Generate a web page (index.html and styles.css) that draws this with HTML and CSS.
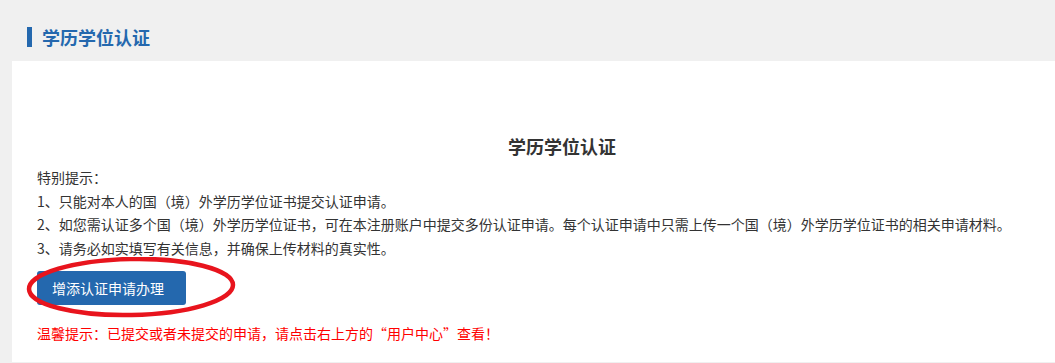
FILE: index.html
```
<!DOCTYPE html>
<html lang="zh-CN">
<head>
<meta charset="utf-8">
<title>学历学位认证</title>
<link rel="stylesheet" href="styles.css">
</head>
<body>
<div class="page-head">
  <h2 class="page-title">学历学位认证</h2>
</div>
<div class="panel">
  <h3 class="panel-title">学历学位认证</h3>
  <div class="notes">
    <p>特别提示：</p>
    <p>1、只能对本人的国（境）外学历学位证书提交认证申请。</p>
    <p>2、如您需认证多个国（境）外学历学位证书，可在本注册账户中提交多份认证申请。每个认证申请中只需上传一个国（境）外学历学位证书的相关申请材料。</p>
    <p>3、请务必如实填写有关信息，并确保上传材料的真实性。</p>
  </div>
  <div class="btn-wrap">
    <a class="btn-add" href="#">增添认证申请办理</a>
    <svg class="mark" width="221" height="70" viewBox="0 0 221 70" aria-hidden="true">
      <ellipse cx="105" cy="30" rx="102" ry="28" fill="none" stroke="#e8141d" stroke-width="4.5" transform="rotate(-1.2 105 30)"/>
    </svg>
  </div>
  <p class="tip">温馨提示：已提交或者未提交的申请，请点击右上方的“用户中心”查看！</p>
</div>
</body>
</html>
```
FILE: styles.css
```
html, body {
  margin: 0;
  padding: 0;
}
body {
  background: #f0f0f0;
  font-family: "Noto Sans CJK SC", "Microsoft YaHei", sans-serif;
  color: #333;
  font-size: 14px;
}
.page-head {
  padding: 27px 0 14px 27px;
}
.page-title {
  margin: 0;
  border-left: 5px solid #2468ae;
  padding-left: 10px;
  font-size: 18px;
  line-height: 20px;
  font-weight: bold;
  color: #2468ae;
}
.panel {
  background: #fff;
  margin-left: 12px;
  padding: 73px 25px 17px;
}
.panel-title {
  margin: 0 0 8px 57px;
  font-size: 18px;
  line-height: 24px;
  font-weight: bold;
  text-align: center;
  color: #333;
}
.notes p {
  margin: 0;
  line-height: 23.7px;
  white-space: nowrap;
}
.btn-wrap {
  position: relative;
  width: 149px;
  margin-top: 10px;
}
.btn-add {
  display: block;
  box-sizing: border-box;
  width: 149px;
  height: 34px;
  line-height: 34px;
  padding-left: 15px;
  background: #2468ae;
  color: #fff;
  text-decoration: none;
  border-radius: 3px;
  font-size: 14px;
}
.mark {
  position: absolute;
  left: -11px;
  top: -14px;
}
.tip {
  margin: 16px 0 0;
  line-height: 24px;
  color: #f00;
}
```
